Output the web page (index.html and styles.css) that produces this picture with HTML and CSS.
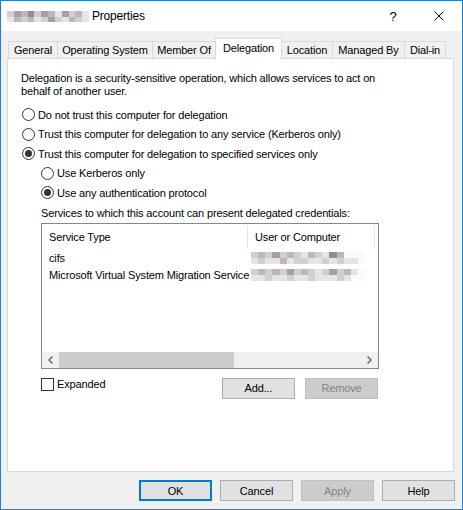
FILE: index.html
```html
<!DOCTYPE html>
<html>
<head>
<meta charset="utf-8">
<link rel="stylesheet" href="styles.css">
</head>
<body>
<div class="window">
  <div class="titlebar">
    <div class="mosaic title-mosaic">
      <span class="m2"></span><span class="m4"></span><span class="m3"></span><span class="m5"></span><span class="m2"></span><span class="m4"></span><span class="m3"></span><span class="m1"></span><span class="m4"></span><span class="m2"></span><span class="m3"></span><span class="m1"></span>
      <span class="m1"></span><span class="m3"></span><span class="m2"></span><span class="m3"></span><span class="m1"></span><span class="m2"></span><span class="m4"></span><span class="m2"></span><span class="m1"></span><span class="m3"></span><span class="m2"></span><span class="m1"></span>
    </div>
    <span class="title-text">Properties</span>
    <span class="tbtn help">?</span>
    <span class="tbtn close">
      <svg width="10" height="10" viewBox="0 0 10 10"><path d="M0.5 0.5 L9.5 9.5 M9.5 0.5 L0.5 9.5" stroke="#000" stroke-width="1" fill="none"/></svg>
    </span>
  </div>
  <div class="body">
    <div class="tabs">
      <div class="tab w-general">General</div>
      <div class="tab w-os">Operating System</div>
      <div class="tab w-member">Member Of</div>
      <div class="tab w-deleg active">Delegation</div>
      <div class="tab w-loc">Location</div>
      <div class="tab w-managed">Managed By</div>
      <div class="tab w-dial">Dial-in</div>
    </div>
    <div class="panel">
      <p class="intro">Delegation is a security-sensitive operation, which allows services to act on<br>behalf of another user.</p>
      <div class="options">
        <label class="radio"><span class="rb"></span>Do not trust this computer for delegation</label>
        <label class="radio"><span class="rb"></span>Trust this computer for delegation to any service (Kerberos only)</label>
        <label class="radio"><span class="rb on"></span>Trust this computer for delegation to specified services only</label>
        <label class="radio sub"><span class="rb"></span>Use Kerberos only</label>
        <label class="radio sub"><span class="rb on"></span>Use any authentication protocol</label>
      </div>
      <div class="services-label">Services to which this account can present delegated credentials:</div>
      <div class="listview">
        <div class="lv-header">
          <div class="hcol c1">Service Type</div>
          <div class="hcol c2">User or Computer</div>
        </div>
        <div class="lv-rows">
          <div class="lv-row">
            <div class="cell c1">cifs</div>
            <div class="cell c2">
              <div class="mosaic list-mosaic">
                <span class="m2"></span><span class="m3"></span><span class="m2"></span><span class="m4"></span><span class="m2"></span><span class="m3"></span><span class="m2"></span><span class="m1"></span><span class="m3"></span><span class="m2"></span><span class="m1"></span><span class="m5"></span><span class="m3"></span><span class="m0"></span><span class="m0"></span><span class="m0"></span>
                <span class="m1"></span><span class="m2"></span><span class="m1"></span><span class="m1"></span><span class="m3"></span><span class="m1"></span><span class="m2"></span><span class="m2"></span><span class="m1"></span><span class="m1"></span><span class="m2"></span><span class="m1"></span><span class="m2"></span><span class="m1"></span><span class="m1"></span><span class="m0"></span>
              </div>
            </div>
          </div>
          <div class="lv-row">
            <div class="cell c1">Microsoft Virtual System Migration Service</div>
            <div class="cell c2">
              <div class="mosaic list-mosaic">
                <span class="m2"></span><span class="m3"></span><span class="m2"></span><span class="m3"></span><span class="m2"></span><span class="m4"></span><span class="m2"></span><span class="m3"></span><span class="m2"></span><span class="m1"></span><span class="m2"></span><span class="m4"></span><span class="m2"></span><span class="m3"></span><span class="m1"></span><span class="m0"></span>
                <span class="m1"></span><span class="m1"></span><span class="m2"></span><span class="m1"></span><span class="m1"></span><span class="m2"></span><span class="m1"></span><span class="m1"></span><span class="m2"></span><span class="m1"></span><span class="m1"></span><span class="m1"></span><span class="m2"></span><span class="m1"></span><span class="m0"></span><span class="m0"></span>
              </div>
            </div>
          </div>
        </div>
        <div class="hscroll">
          <span class="sarrow">
            <svg width="17" height="16" viewBox="0 0 17 16"><path d="M10.5 4.5 L7 8 L10.5 11.5" stroke="#606060" stroke-width="1.4" fill="none"/></svg>
          </span>
          <div class="strack"><div class="sthumb"></div></div>
          <span class="sarrow">
            <svg width="17" height="16" viewBox="0 0 17 16"><path d="M6.5 4.5 L10 8 L6.5 11.5" stroke="#606060" stroke-width="1.4" fill="none"/></svg>
          </span>
        </div>
      </div>
      <div class="under-list">
        <label class="check"><span class="cb"></span>Expanded</label>
        <button class="btn">Add...</button>
        <button class="btn disabled">Remove</button>
      </div>
    </div>
    <div class="dialog-buttons">
      <button class="btn default">OK</button>
      <button class="btn">Cancel</button>
      <button class="btn disabled">Apply</button>
      <button class="btn">Help</button>
    </div>
  </div>
</div>
</body>
</html>
```
FILE: styles.css
```css
* { box-sizing: border-box; }
html, body { margin: 0; padding: 0; }
body {
  width: 463px;
  height: 510px;
  overflow: hidden;
  background: #fff;
  font-family: "Liberation Sans", Arial, sans-serif;
  font-size: 11px;
  letter-spacing: -0.15px;
  color: #000;
}
.window {
  width: 463px;
  height: 510px;
  border: 1px solid #1883d7;
  background: #f0f0f0;
  display: flex;
  flex-direction: column;
}
.titlebar {
  height: 30px;
  flex: none;
  background: #fff;
  display: flex;
  align-items: center;
  padding-left: 6px;
}
.mosaic { display: grid; }
.mosaic span { display: block; }
.m0 { background: #fafafa; }
.m1 { background: #e6e4e8; }
.m2 { background: #d2ced4; }
.m3 { background: #bdb6bd; }
.m4 { background: #a79ea6; }
.m5 { background: #938c94; }
.title-mosaic {
  width: 82px;
  height: 11px;
  grid-template-columns: repeat(12, 1fr);
  grid-template-rows: repeat(2, 1fr);
  margin-top: 1px;
}
.title-text { margin-left: 3px; font-size: 12px; letter-spacing: -0.2px; }
.tbtn {
  width: 46px;
  height: 30px;
  display: flex;
  align-items: center;
  justify-content: center;
  flex: none;
}
.help { margin-left: auto; font-size: 13px; }
.close svg { display: block; }

.body {
  flex: 1;
  display: flex;
  flex-direction: column;
  padding: 7px 7px 0 6px;
}
.tabs {
  display: flex;
  align-items: flex-end;
  height: 20px;
  margin-left: 1px;
  flex: none;
}
.tab {
  height: 17px;
  border: 1px solid #d9d9d9;
  border-bottom: none;
  margin-right: -1px;
  background: #f0f0f0;
  display: flex;
  align-items: center;
  justify-content: center;
  padding-bottom: 0;
  white-space: nowrap;
  flex: none;
}
.tab.active {
  height: 21px;
  margin-bottom: -1px;
  background: #fff;
  position: relative;
  z-index: 2;
  padding-bottom: 2px;
}
.w-general { width: 50px; }
.w-os { width: 96px; }
.w-member { width: 64px; }
.w-deleg { width: 67px; }
.w-loc { width: 52px; }
.w-managed { width: 73px; }
.w-dial { width: 42px; }

.panel {
  flex: none;
  height: 414px;
  margin-right: 1px;
  background: #fff;
  border: 1px solid #d9d9d9;
  padding: 13px 0 0 13px;
}
.intro {
  margin: 0;
  line-height: 13px;
}
.options { margin-top: 7px; margin-left: 1px; }
.radio {
  display: flex;
  align-items: center;
  height: 19.5px;
  white-space: nowrap;
}
.radio.sub { margin-left: 19px; }
.rb {
  width: 13px;
  height: 13px;
  border: 1px solid #333;
  border-radius: 50%;
  background: #fff;
  margin-right: 3px;
  display: flex;
  align-items: center;
  justify-content: center;
  flex: none;
}
.rb.on::after {
  content: "";
  width: 7px;
  height: 7px;
  border-radius: 50%;
  background: #333;
}
.services-label {
  margin-top: 4px;
  margin-left: 20px;
  line-height: 13px;
  white-space: nowrap;
}
.listview {
  margin-top: 3px;
  margin-left: 20px;
  width: 338px;
  height: 146px;
  border: 1px solid #828790;
  background: #fff;
  display: flex;
  flex-direction: column;
}
.lv-header {
  display: flex;
  height: 25px;
  flex: none;
}
.hcol {
  display: flex;
  align-items: center;
  padding-left: 7px;
  height: 24px;
  margin-top: 1px;
  border-right: 1px solid #e5e5e5;
  white-space: nowrap;
}
.hcol.c1, .cell.c1 { width: 206px; }
.hcol.c2 { width: 127px; }
.lv-rows { flex: 1; padding-top: 1px; }
.lv-row { display: flex; height: 17px; align-items: center; }
.cell { white-space: nowrap; }
.cell.c1 { padding-left: 7px; }
.cell.c2 { padding-left: 3px; }
.list-mosaic {
  width: 114px;
  height: 12px;
  grid-template-columns: repeat(16, 1fr);
  grid-template-rows: repeat(2, 1fr);
}
.hscroll {
  flex: none;
  height: 16px;
  background: #f0f0f0;
  display: flex;
  align-items: stretch;
}
.sarrow { width: 17px; flex: none; display: flex; align-items: center; }
.sarrow svg { display: block; }
.strack { flex: 1; display: flex; }
.sthumb { width: 175px; background: #cdcdcd; }

.under-list {
  display: flex;
  align-items: flex-start;
  margin-top: 9px;
  margin-left: 20px;
}
.check {
  display: flex;
  align-items: center;
  width: 181px;
  height: 13px;
  flex: none;
}
.cb {
  width: 13px;
  height: 13px;
  border: 1px solid #333;
  background: #fff;
  margin-right: 3px;
  flex: none;
}
.btn {
  width: 73px;
  height: 21px;
  padding: 0;
  margin: 0;
  border: 1px solid #adadad;
  background: #e1e1e1;
  font-family: inherit;
  font-size: 11px;
  letter-spacing: -0.15px;
  color: #000;
  flex: none;
}
.btn.disabled {
  background: #cccccc;
  border-color: #bfbfbf;
  color: #838383;
}
.btn.default { border: 2px solid #0078d7; }
.under-list .btn + .btn { margin-left: 10px; }
.dialog-buttons {
  display: flex;
  justify-content: flex-end;
  gap: 8px;
  margin-top: 8px;
}
```
